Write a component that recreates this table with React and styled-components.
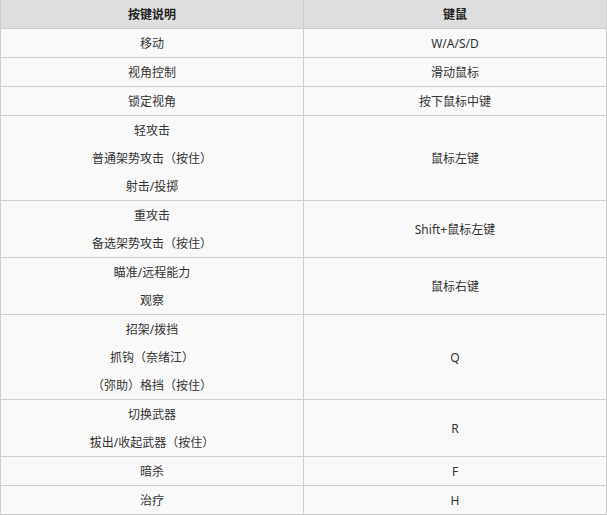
import React from "react";
import styled, { createGlobalStyle } from "styled-components";

const Global = createGlobalStyle`
  html, body { margin: 0; padding: 0; background: #ffffff; }
  body {
    font-family: "Noto Sans", "Noto Sans CJK SC", sans-serif;
    font-size: 12px;
    color: #333;
  }
`;

const Table = styled.div`
  width: 607px;
  border-left: 1px solid #cfcfcf;
  box-sizing: border-box;
`;

const Row = styled.div`
  display: grid;
  grid-template-columns: 303px 303px;
  background: ${(p) => (p.$head ? "#dedede" : "#f9f9f9")};
`;

const Cell = styled.div`
  display: flex;
  flex-direction: column;
  align-items: center;
  justify-content: center;
  border-right: 1px solid #cfcfcf;
  border-bottom: 1px solid #cfcfcf;
  box-sizing: border-box;
  min-height: 29px;
  font-weight: ${(p) => (p.$head ? 700 : 400)};
  color: ${(p) => (p.$head ? "#222" : "#333")};
`;

const Line = styled.span`
  display: block;
  line-height: 28px;
  white-space: nowrap;
  transform: translateY(1px);
`;

const rows = [
  [["移动"], "W/A/S/D"],
  [["视角控制"], "滑动鼠标"],
  [["锁定视角"], "按下鼠标中键"],
  [["轻攻击", "普通架势攻击（按住）", "射击/投掷"], "鼠标左键"],
  [["重攻击", "备选架势攻击（按住）"], "Shift+鼠标左键"],
  [["瞄准/远程能力", "观察"], "鼠标右键"],
  [["招架/拨挡", "抓钩（奈绪江）", "（弥助）格挡（按住）"], "Q"],
  [["切换武器", "拔出/收起武器（按住）"], "R"],
  [["暗杀"], "F"],
  [["治疗"], "H"],
];

export default function App() {
  return (
    <>
      <Global />
      <Table>
        <Row $head>
          <Cell $head>
            <Line>按键说明</Line>
          </Cell>
          <Cell $head>
            <Line>键鼠</Line>
          </Cell>
        </Row>
        {rows.map(([lines, key], i) => (
          <Row key={i}>
            <Cell>
              {lines.map((l, j) => (
                <Line key={j}>{l}</Line>
              ))}
            </Cell>
            <Cell>
              <Line>{key}</Line>
            </Cell>
          </Row>
        ))}
      </Table>
    </>
  );
}
